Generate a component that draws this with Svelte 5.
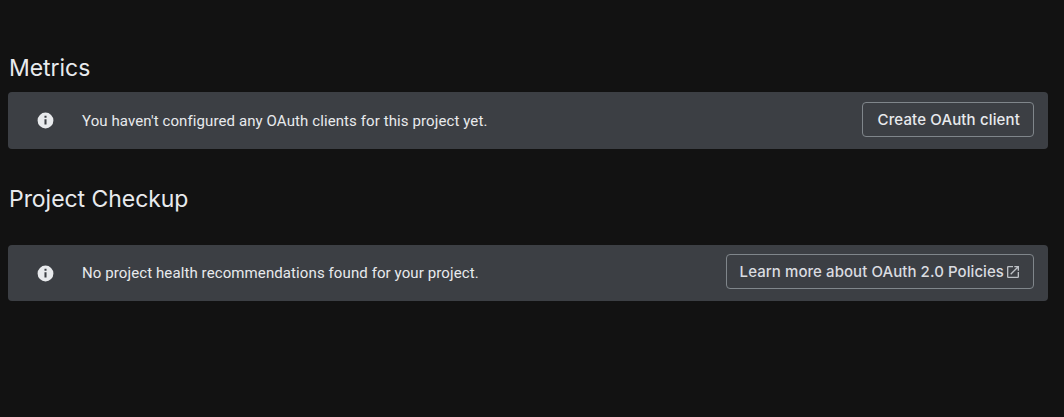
<script lang="ts">
    const sections = [
        {
            title: 'Metrics',
            message: "You haven't configured any OAuth clients for this project yet.",
            action: 'Create OAuth client',
            external: false,
            gap: 'tight'
        },
        {
            title: 'Project Checkup',
            message: 'No project health recommendations found for your project.',
            action: 'Learn more about OAuth 2.0 Policies',
            external: true,
            gap: 'wide'
        }
    ]
</script>

<main class="page">
    {#each sections as s}
        <section class="section {s.gap}">
            <h2>{s.title}</h2>
            <div class="banner">
                <svg class="info" viewBox="0 0 24 24" width="19" height="19" aria-hidden="true">
                    <path fill="#e8eaed" d="M12 2a10 10 0 1 0 0 20 10 10 0 0 0 0-20zm1.3 15h-2.6v-6.6h2.6V17zm0-8.6h-2.6V6h2.6v2.4z"/>
                </svg>
                <p>{s.message}</p>
                <button type="button" class:external={s.external}>
                    {s.action}
                    {#if s.external}
                        <svg viewBox="0 0 24 24" width="16" height="16" aria-hidden="true">
                            <path fill="#bdc1c6" d="M19 19H5V5h7V3H5a2 2 0 0 0-2 2v14a2 2 0 0 0 2 2h14a2 2 0 0 0 2-2v-7h-2v7zM14 3v2h3.6l-9.8 9.8 1.4 1.4L19 6.4V10h2V3h-7z"/>
                        </svg>
                    {/if}
                </button>
            </div>
        </section>
    {/each}
</main>

<style>
    :global(body) {
        background: #121212;
    }
    .page {
        box-sizing: border-box;
        height: 417px;
        padding: 53px 16px 0 8px;
        background: #121212;
        font-family: Roboto, "Liberation Sans", sans-serif;
    }
    .section {
        display: flex;
        flex-direction: column;
    }
    .section + .section {
        margin-top: 35px;
    }
    h2 {
        margin: 0 0 0 1px;
        font-family: Inter, Roboto, sans-serif;
        font-size: 23px;
        font-weight: 400;
        letter-spacing: -0.05px;
        line-height: 30px;
        color: #e8eaed;
    }
    .tight h2 {
        margin-bottom: 9px;
    }
    .wide h2 {
        margin-bottom: 31px;
    }
    .banner {
        display: flex;
        align-items: center;
        height: 57px;
        box-sizing: border-box;
        padding: 0 14px 0 28px;
        background: #3c3f44;
        border-radius: 4px;
    }
    .wide .banner {
        height: 56px;
    }
    .info {
        flex: none;
    }
    p {
        flex: 1;
        margin: 0 0 0 27px;
        font-size: 15px;
        line-height: 20px;
        letter-spacing: 0.1px;
        color: #e8eaed;
    }
    button {
        display: flex;
        align-items: center;
        gap: 1px;
        height: 35px;
        margin-bottom: 2px;
        padding: 0 13px 0 14px;
        background: transparent;
        border: 1px solid #80868b;
        border-radius: 4px;
        font-family: Inter, Roboto, sans-serif;
        font-size: 15px;
        font-weight: 500;
        letter-spacing: 0.15px;
        color: #e8eaed;
    }
    .wide button {
        margin-bottom: 3px;
    }
    .external {
        padding: 0 12px 0 13px;
        letter-spacing: 0.07px;
        color: #dadce0;
    }
</style>
